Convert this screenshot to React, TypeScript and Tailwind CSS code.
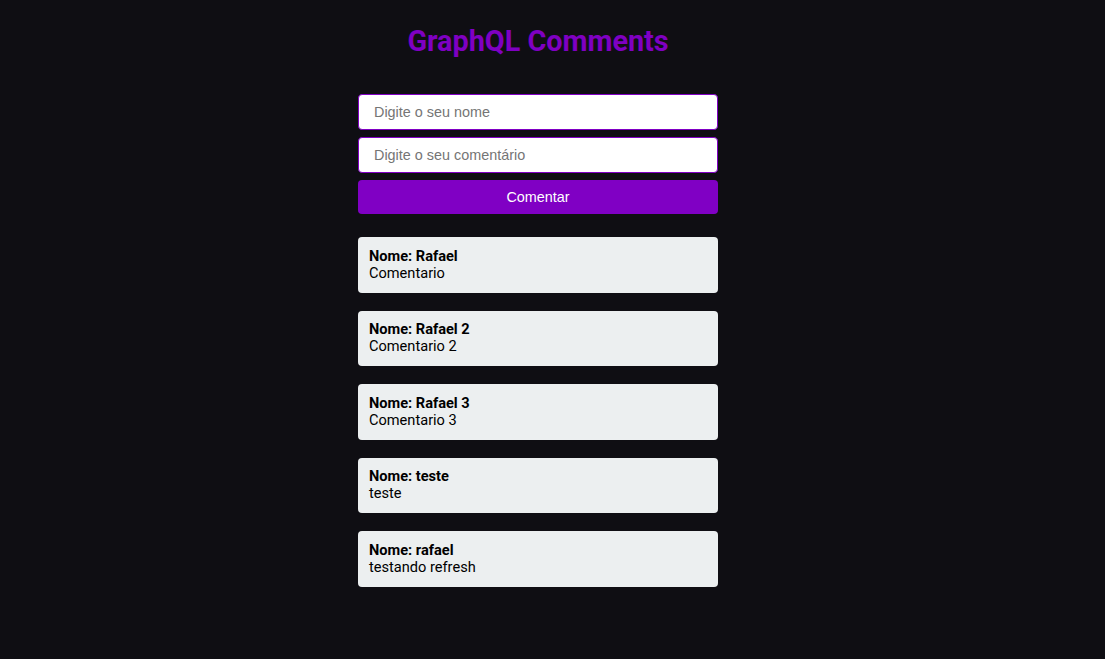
import React from "react";

const comments = [
  { name: "Rafael", text: "Comentario" },
  { name: "Rafael 2", text: "Comentario 2" },
  { name: "Rafael 3", text: "Comentario 3" },
  { name: "teste", text: "teste" },
  { name: "rafael", text: "testando refresh" },
];

export default function App() {
  return (
    <div className="min-h-[659px] w-full bg-[#0f0e13] flex flex-col items-center pr-[29px]" style={{ fontFamily: "Roboto, sans-serif" }}>
      <h1 className="mt-[24px] text-[28.8px] leading-[34px] font-bold text-[#7f00c2]">GraphQL Comments</h1>
      <div className="mt-[36px] w-[360px] flex flex-col">
        <input
          className="h-[36px] w-full rounded-[4px] border border-[#8000c4] bg-white px-[15px] text-[14.4px] text-black placeholder:text-[#757575] outline-none"
          style={{ fontFamily: '"Liberation Sans", Arial, sans-serif' }}
          placeholder="Digite o seu nome"
        />
        <input
          className="mt-[7px] h-[36px] w-full rounded-[4px] border border-[#8000c4] bg-white px-[15px] text-[14.4px] text-black placeholder:text-[#757575] outline-none"
          style={{ fontFamily: '"Liberation Sans", Arial, sans-serif' }}
          placeholder="Digite o seu comentário"
        />
        <button
          className="mt-[7px] h-[34px] w-full rounded-[4px] bg-[#8000c4] pt-[1px] text-[14.4px] text-white"
          style={{ fontFamily: '"Liberation Sans", Arial, sans-serif' }}
        >
          Comentar
        </button>
        <div className="mt-[23px] flex flex-col gap-[18px]">
          {comments.map((c, i) => (
            <div key={i} className="h-[55.5px] rounded-[4px] bg-[#eceff0] px-[11px] py-[10.5px] text-[14.6px] leading-[17px] text-black">
              <div className="font-bold">Nome: {c.name}</div>
              <div>{c.text}</div>
            </div>
          ))}
        </div>
      </div>
    </div>
  );
}
